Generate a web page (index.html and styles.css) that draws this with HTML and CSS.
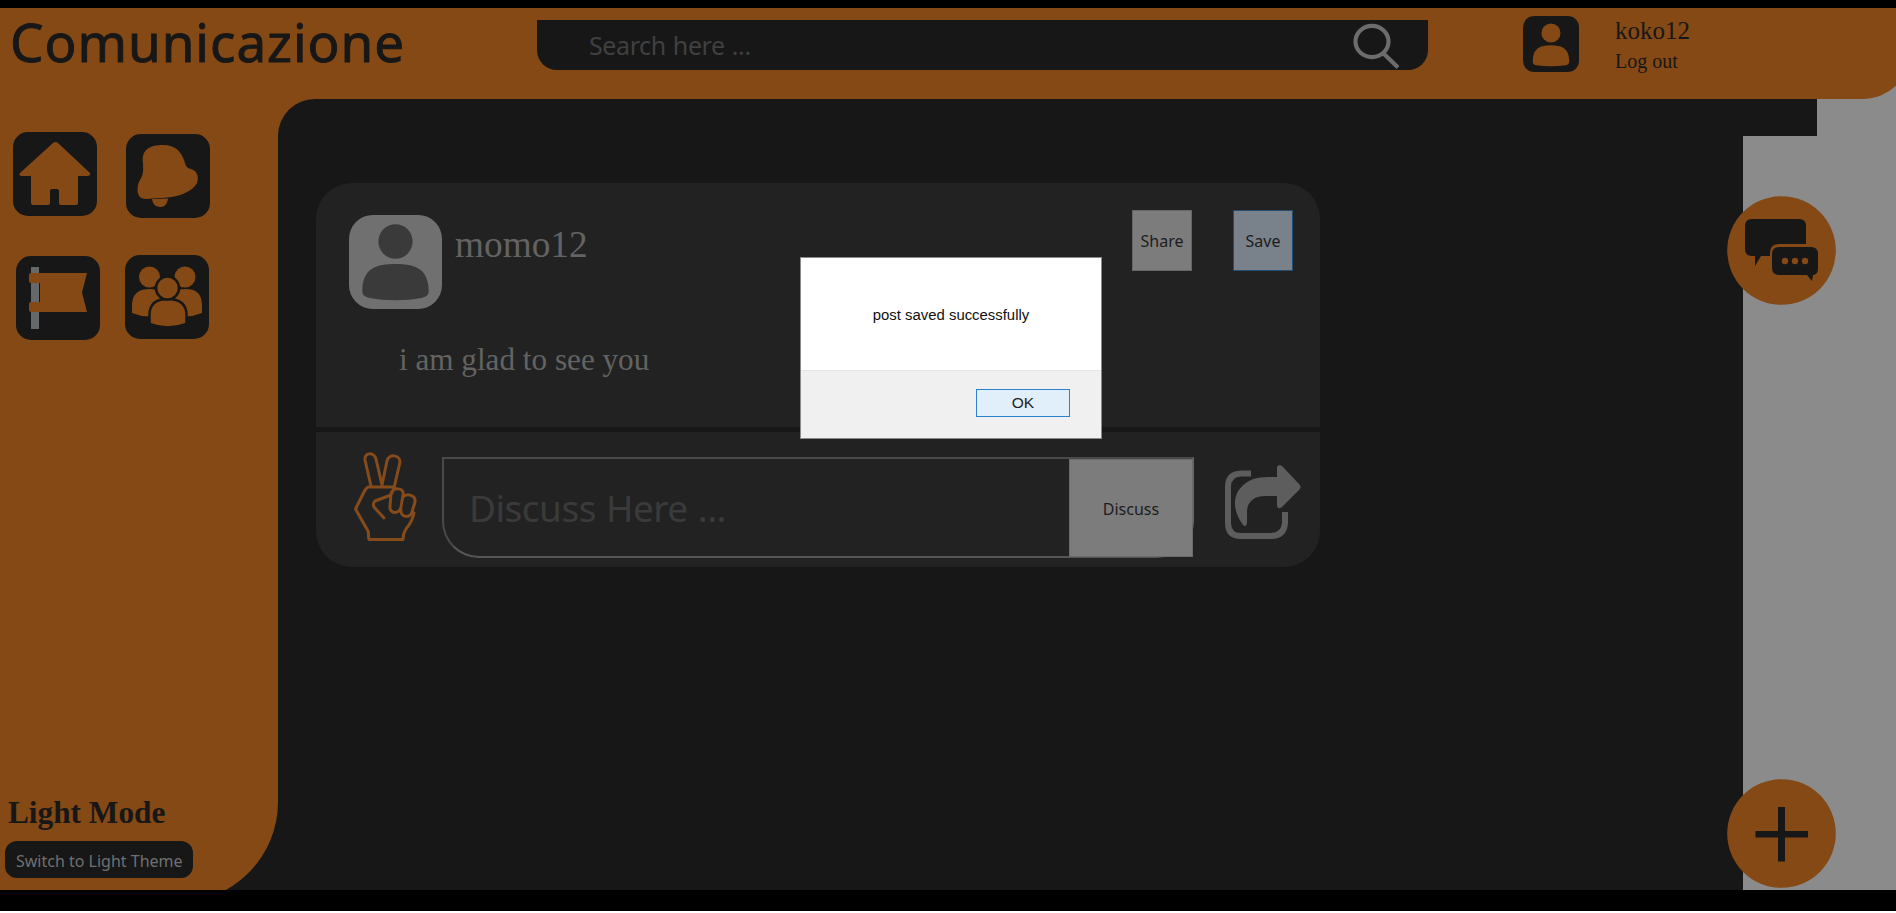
FILE: index.html
```
<!DOCTYPE html>
<html lang="en">
<head>
<meta charset="utf-8">
<title>Comunicazione</title>
<link rel="stylesheet" href="styles.css">
</head>
<body>
<div class="window">
  <header class="header">
    <h1 class="brand">Comunicazione</h1>
    <div class="search">
      <span class="search-hint">Search here ...</span>
      <svg class="search-icon" width="48" height="48" viewBox="0 0 48 48"><ellipse cx="21" cy="19.500" rx="16.500" ry="15.600"/><path d="M32 31 47 45.500"/></svg>
    </div>
    <svg class="user-icon" width="56" height="56" viewBox="0 0 94 94"><rect class="ink" width="94" height="94" rx="19"/><g class="accent"><circle cx="47" cy="28.500" r="16"/><path d="M47 49C65 49 77 54 77.500 74C78 79 77 82 72 82.500C56 85 38 85 22 82.500C17 82 16 79 16.500 74C17 54 29 49 47 49Z"/></g></svg>
    <div class="account">
      <div class="account-name">koko12</div>
      <div class="logout">Log out</div>
    </div>
  </header>

  <div class="body">
    <aside class="sidebar">
      <nav class="nav">
        <svg class="home" width="84" height="84" viewBox="0 0 84 84"><rect class="ink" width="84" height="84" rx="15"/><path class="accent" d="M40 11Q42.500 9 45 11L77 41Q78 44 74 44H65V71Q65 73 63 73H48Q46 73 46 71V59Q46 57 44 57H39Q37 57 37 59V71Q37 73 35 73H20Q18 73 18 71V44H9Q5 43.500 7 41Z"/></svg>
        <svg class="bell" width="84" height="84" viewBox="0 0 84 84"><rect class="ink" width="84" height="84" rx="15"/><g class="accent"><path d="M17 29C15 15 25 11 37 11C50 11 55 18 58 26C60 33 61 34 65 35C72 37 73 44 71 49C65 60 47 64 33 64C26 64 21 66 15 64C10 60 11 51 14 46C18 40 17 36 17 29Z"/><path d="M26 65 42 64.500C41 70 39 73 34.500 73C29 73 27 70 26 65Z"/></g></svg>
        <svg class="flag" width="84" height="84" viewBox="0 0 84 84"><rect class="ink" width="84" height="84" rx="15"/><path class="pole" d="M15 11H23V73H15Z"/><path class="accent" d="M15 17H71L66 36.500 71 56H15Q13 56 13 53V48Q13 46 15 46H24V27H15Q13 27 13 25V19Q13 17 15 17Z"/></svg>
        <svg class="people" width="84" height="84" viewBox="0 0 84 84"><rect class="ink" width="84" height="84" rx="15"/><g class="accent"><circle cx="24.500" cy="22" r="10.500"/><circle cx="60" cy="22" r="10.500"/><path d="M7 58V51C7 38 14 34 25 34Q38 34 41 51V58Q24 65 7 58ZM43 58V51Q46 34 60 34C71 34 77 38 77 51V58Q60 65 43 58Z"/></g><g class="accent outlined"><path d="M24.500 69V60C24.500 48 32 44 42.500 44C53 44 61.500 48 61.500 60V69Q42.500 76 24.500 69Z"/><circle cx="42.500" cy="33" r="11.500"/></g></svg>
      </nav>
      <div class="theme">
        <h2 class="theme-title">Light Mode</h2>
        <div class="theme-button">Switch to Light Theme</div>
      </div>
    </aside>

    <main class="main">
      <div class="top-strip"></div>
      <div class="feed">
        <article class="post">
          <section class="post-content">
            <div class="post-head">
              <svg class="avatar" width="93" height="94" viewBox="0 0 94 94" preserveAspectRatio="none"><rect class="avatar-back" width="94" height="94" rx="24"/><g class="avatar-figure"><circle cx="47" cy="26.500" r="17.300"/><path d="M47 49C66 49 80 53 80.500 75C81 80 78 82 73 83C57 86 37 86 21 83C16 82 13 80 13.500 75C14 53 28 49 47 49Z"/></g></svg>
              <span class="post-author">momo12</span>
              <span class="post-button share">Share</span>
              <span class="post-button save">Save</span>
            </div>
            <p class="post-text">i am glad to see you</p>
          </section>
          <section class="post-actions">
            <svg class="peace" width="64" height="92" viewBox="0 0 64 92"><path d="M17 34 11 8C10 0 20 0 22 7L28 33 33 9C35 1 46 3 46 10L40 36M14 35H40M14 35C12 36 11 38 10 40L1.500 57 14 79C15 82 14 85 15 87.500H49C49 83 50 80 52 77C57 71 59 66 60 61M40 36 37 43 21 49C19 51 19 53 20 55L30 66M37 42C38 35 51 35 49 43L47 55C45 63 35 62 36 54ZM49 45C53 41 62 43 61 50L58 60C56 67 46 65 47 58"/></svg>
            <div class="discuss">
              <span class="discuss-hint">Discuss Here ...</span>
              <span class="discuss-button">Discuss</span>
            </div>
            <svg class="forward" width="78" height="78" viewBox="0 0 78 78"><path class="forward-box" d="M27 9.500H17Q4 10 4 23V59Q4 72 17 72H47Q60 72 61 59V48"/><path class="forward-gap" d="M53 3Q55-1 59 3L75 20Q78 23 75 26L58 43Q54 46 53 42V32H41C30 32 23 38 23 48V59Q22 64 19 61C6 43 10 27 22 19C30 13 39 13 53 13Z"/></svg>
          </section>
        </article>
      </div>
    </main>

    <div class="rail">
      <svg class="chat" width="109" height="109" viewBox="0 0 109 109"><circle class="accent" cx="54.500" cy="54.500" r="54.300"/><path class="ink" d="M25 23H72Q79 23 79 30V48H52Q43 48 43 57V60H34L28 70V60H25Q18 60 18 53V30Q18 23 25 23Z"/><path class="ink" d="M52 51H84Q91 51 91 58V72Q91 79 86 79L85 85 80 79H52Q45 79 45 72V58Q45 51 52 51Z"/><g class="accent"><circle cx="58" cy="65" r="3.200"/><circle cx="68" cy="65" r="3.200"/><circle cx="78" cy="65" r="3.200"/></g></svg>
      <svg class="add" width="109" height="109" viewBox="0 0 109 109"><circle class="accent" cx="54.500" cy="54.500" r="54.300"/><path class="ink" d="M51 28H58V52H81V58.500H58V82.500H51V58.500H28.500V52H51Z"/></svg>
    </div>
  </div>
</div>

<div class="dialog" role="alertdialog">
  <div class="dialog-message">post saved successfully</div>
  <div class="dialog-footer"><span class="dialog-ok">OK</span></div>
</div>
</body>
</html>
```
FILE: styles.css
```
* { box-sizing: border-box; }
html { background: #fff; }
body {
  margin: 0;
  width: 1896px;
  height: 913px;
  overflow: hidden;
  background: #fff;
  font-family: "Liberation Serif", "Times New Roman", serif;
}
h1, h2, p { margin: 0; font-weight: normal; }
svg { display: block; flex: none; }
.accent { fill: #844914; }
.ink { fill: #171717; }

.window {
  height: 911px;
  padding-top: 8px;
  border-bottom: 21px solid #000;
  background: linear-gradient(#000 8px, #8b8b8b 8px);
  overflow: hidden;
  display: flex;
  flex-direction: column;
}

/* Header */
.header {
  flex: none;
  width: 1912px;
  height: 91px;
  padding-left: 10px;
  display: flex;
  align-items: flex-start;
  background: #844914;
  color: #171717;
  border-bottom-right-radius: 50px;
}
.brand {
  width: 527px;
  font: 53px/67px "Noto Sans", sans-serif;
  letter-spacing: 0.95px;
  -webkit-text-stroke: 0.9px #171717;
}
.search {
  width: 891px;
  height: 50px;
  margin-top: 12px;
  padding: 0 29px 0 52px;
  display: flex;
  justify-content: space-between;
  background: #171717;
  border-radius: 0 0 20px 20px;
}
.search-hint {
  font: 25px/50px "Noto Sans", sans-serif;
  letter-spacing: -0.4px;
  word-spacing: 1px;
  color: #404040;
}
.search-icon { fill: none; stroke: #6c6c6c; stroke-width: 4.2; margin-top: 2px; }
.user-icon { margin: 8px 0 0 95px; }
.account { margin: 9px 0 0 36px; }
.account-name { font-size: 25px; line-height: 28px; }
.logout { font-size: 20px; line-height: 33px; }

/* Page body */
.body {
  flex: 1;
  display: flex;
  min-height: 0;
  background: linear-gradient(#844914 50px, #171717 50px) 0 0 / 320px 100% no-repeat;
}
.sidebar {
  width: 278px;
  height: 803px;
  flex: none;
  display: flex;
  flex-direction: column;
  justify-content: space-between;
  padding: 33px 0 24px 5px;
  background: #844914;
  border-bottom-right-radius: 100px;
}
.nav { display: grid; grid-template-columns: 113px 84px; grid-template-rows: 122px 90px; padding-left: 8px; }
.bell { margin-top: 2px; }
.flag { margin: 2px 0 0 3px; }
.people { margin: 1px 0 0 -1px; }
.pole { fill: #66696a; }
.outlined { stroke: #171717; stroke-width: 2.5; }
.theme-title { font-size: 31.3px; line-height: 36px; font-weight: bold; color: #171717; padding: 0 0 10px 3px; }
.theme-button {
  width: 188px;
  height: 37px;
  padding-left: 11px;
  border-radius: 12px;
  background: #171717;
  color: #707070;
  font: 16px/40px "Noto Sans", sans-serif;
}
.main { width: 1539px; flex: none; }
.top-strip { height: 37px; background: #171717; border-top-left-radius: 37px; }
.feed { width: 1465px; height: 754px; padding: 47px 0 0 38px; background: #171717; }

/* Post */
.post { width: 1004px; height: 384px; display: flex; flex-direction: column; border-radius: 36px; background: #222; }
.post-content { height: 249px; padding: 27px 27px 0 33px; border-bottom: 5px solid #171717; }
.post-head { display: flex; height: 99px; align-items: flex-start; }
.avatar { margin-top: 5px; }
.avatar-back { fill: #707070; }
.avatar-figure { fill: #3a3a3a; }
.post-author { margin-left: 13px; margin-top: 10px; flex: 1; font-size: 37.3px; line-height: 49px; color: #636363; }
.post-button {
  width: 60px;
  height: 61px;
  border: 1px solid #666;
  background: #7c7c7c;
  color: #1c1c1c;
  font: 16px/60px "Noto Sans", sans-serif;
  text-align: center;
}
.share { margin-right: 41px; }
.save { background: #79828a; border-color: #254d70; }
.post-text { margin: 33px 0 0 50px; font-size: 31.2px; line-height: 36px; color: #636363; }
.post-actions { display: flex; padding: 20px 0 0 38px; }
.peace { fill: none; stroke: #864b1b; stroke-width: 3; stroke-linejoin: round; stroke-linecap: round; }
.discuss {
  width: 752px;
  height: 101px;
  margin: 5px 0 0 24px;
  padding-left: 25px;
  display: flex;
  justify-content: space-between;
  border: 2px solid #4a4a4a;
  border-bottom-color: #555;
  border-right-color: #666;
  border-radius: 0 0 37px 37px;
}
.discuss-hint { font: 37px/98px "Noto Sans", sans-serif; letter-spacing: -0.5px; word-spacing: 1px; color: #3a3a3a; }
.discuss-button {
  width: 124px;
  height: 98px;
  margin-right: -1px;
  border: 1px solid #6a6a6a;
  background: #7c7c7c;
  color: #1c1c1c;
  font: 16px/98px "Noto Sans", sans-serif;
  text-align: center;
}
.forward { margin: 12px 0 0 30px; }
.forward-box { fill: none; stroke: #5d5d5d; stroke-width: 6; }
.forward-gap { fill: #5d5d5d; }

/* Right rail */
.rail { position: relative; width: 109px; margin-left: -90px; padding-top: 97px; display: flex; flex-direction: column; gap: 474px; }

/* Alert dialog over the page */
.dialog {
  position: absolute;
  left: 800px;
  top: 257px;
  width: 302px;
  height: 182px;
  display: flex;
  flex-direction: column;
  border: 1px solid #8a8a8a;
  background: #fff;
  font: 14.9px "Liberation Sans", Arial, sans-serif;
  color: #111;
}
.dialog-message { height: 112px; padding-top: 47px; line-height: 20px; text-align: center; }
.dialog-footer { flex: 1; display: flex; justify-content: flex-end; padding: 18px 31px 0 0; background: #f0f0f0; border-top: 1px solid #e6e6e6; }
.dialog-ok { width: 94px; height: 28px; border: 1px solid #2a82cf; background: #e1effb; font-size: 15.5px; line-height: 25px; text-align: center; color: #222; }
```
